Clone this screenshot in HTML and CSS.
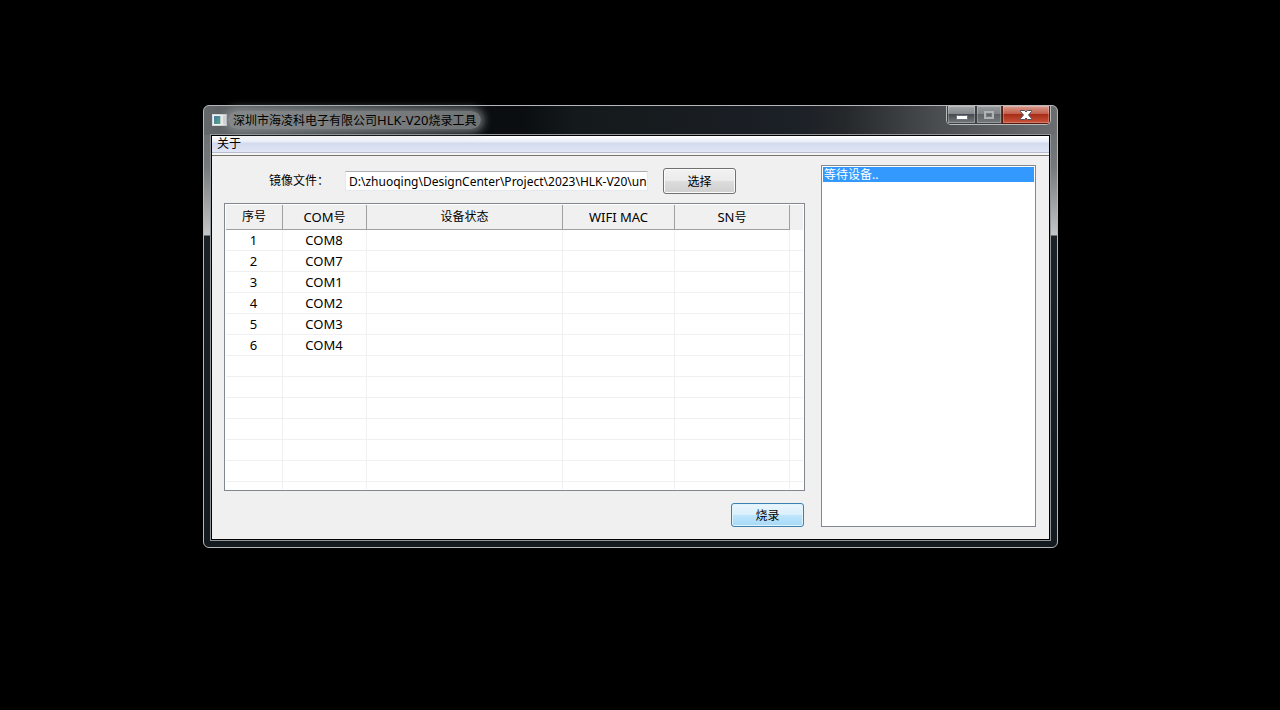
FILE: index.html
```html
<!DOCTYPE html>
<html lang="zh-CN">
<head>
<meta charset="utf-8">
<title>深圳市海凌科电子有限公司HLK-V20烧录工具</title>
<link rel="stylesheet" href="styles.css">
</head>
<body>
<main class="window">
  <header class="titlebar">
    <svg class="app-icon" width="16" height="14" viewBox="0 0 16 14" aria-hidden="true">
      <defs><linearGradient id="pane" x1="0" y1="0" x2="1" y2="1"><stop offset="0" stop-color="#4779b0"/><stop offset="1" stop-color="#55a878"/></linearGradient></defs>
      <rect x="0.5" y="1.5" width="14" height="11" fill="#f4f5f6" stroke="#d4d8da"/>
      <rect x="2" y="3" width="6" height="8" fill="url(#pane)"/>
      <rect x="8" y="3" width="1" height="8" fill="#b9d2cc"/>
      <rect x="11" y="3" width="2" height="8" fill="#e4e6e6"/>
    </svg>
    <h1 class="title">深圳市海凌科电子有限公司<span class="latin">HLK-V20</span>烧录工具</h1>
    <div class="caption">
      <button class="cap cap-min" type="button" aria-label="最小化"><svg width="12" height="6" viewBox="0 0 12 6"><rect x="0.5" y="1.5" width="11" height="4" rx="1" fill="#fff" stroke="#6a7080"/></svg></button>
      <button class="cap cap-max" type="button" aria-label="最大化" disabled><svg width="12" height="10" viewBox="0 0 12 10"><path d="M2 2h8v6H2z" fill="none" stroke="#b0b3b4" stroke-width="2"/><path d="M3.500 3.500h5v3h-5z" fill="none" stroke="#777b7d"/></svg></button>
      <button class="cap cap-close" type="button" aria-label="关闭"><svg width="12" height="10" viewBox="0 0 12 10"><path d="M.5 .5h4L6 2 7.500 .5h4v1L8.500 5l3 3.500v1h-4L6 8 4.500 9.500h-4v-1L3.500 5l-3-3.500z" fill="#fff" stroke="#50505c"/></svg></button>
    </div>
  </header>
  <div class="frame">
    <nav class="menubar"><button class="menu" type="button">关于</button></nav>
    <div class="client">
      <section class="left">
        <div class="file-row">
          <label class="label" for="image">镜像文件：</label>
          <input class="path" id="image" type="text" value="D:\zhuoqing\DesignCenter\Project\2023\HLK-V20\uni_app.img">
          <button class="btn" type="button">选择</button>
        </div>
        <div class="grid-box">
          <table class="grid">
            <colgroup><col class="c-no"><col class="c-com"><col class="c-state"><col class="c-mac"><col class="c-sn"><col class="c-end"></colgroup>
            <thead><tr><th>序号</th><th><span class="latin">COM</span>号</th><th>设备状态</th><th><span class="latin">WIFI MAC</span></th><th><span class="latin">SN</span>号</th><th class="end"></th></tr></thead>
            <tbody>
              <tr><td>1</td><td>COM8</td><td></td><td></td><td></td><td></td></tr>
              <tr><td>2</td><td>COM7</td><td></td><td></td><td></td><td></td></tr>
              <tr><td>3</td><td>COM1</td><td></td><td></td><td></td><td></td></tr>
              <tr><td>4</td><td>COM2</td><td></td><td></td><td></td><td></td></tr>
              <tr><td>5</td><td>COM3</td><td></td><td></td><td></td><td></td></tr>
              <tr><td>6</td><td>COM4</td><td></td><td></td><td></td><td></td></tr>
              <tr><td></td><td></td><td></td><td></td><td></td><td></td></tr>
              <tr><td></td><td></td><td></td><td></td><td></td><td></td></tr>
              <tr><td></td><td></td><td></td><td></td><td></td><td></td></tr>
              <tr><td></td><td></td><td></td><td></td><td></td><td></td></tr>
              <tr><td></td><td></td><td></td><td></td><td></td><td></td></tr>
              <tr><td></td><td></td><td></td><td></td><td></td><td></td></tr>
              <tr class="last"><td></td><td></td><td></td><td></td><td></td><td></td></tr>
            </tbody>
          </table>
        </div>
        <div class="actions"><button class="btn btn-primary" type="button">烧录</button></div>
      </section>
      <ul class="log"><li class="log-item">等待设备..</li></ul>
    </div>
  </div>
</main>
</body>
</html>
```

FILE: styles.css
```css
* { box-sizing: border-box; }
body {
  margin: 0;
  padding: 105px 222px 105px 203px;
  background: #000;
  color: #000;
  font: 12px/16px "Noto Sans", "Noto Sans CJK SC", sans-serif;
}
button, input { font: inherit; color: inherit; }
.latin { font-size: 13px; }
.window {
  border: 1px solid #b4b8ba;
  border-radius: 6px;
  padding: 0 6px 6px;
  background:
    linear-gradient(90deg, #64686b 0, #43484b 110px, #0a0e10 280px, #0a0e10 320px, #14191b 370px, #1c2027 590px, #24282b 640px, #4c5053 740px, #6a6e70 100%) 0 0 / 100% 29px no-repeat,
    linear-gradient(#676b6e 0, #75787a 60px, #c4c5c6 129px, #1a2127 130px, #141b20 100%);
}
.titlebar { display: flex; height: 28px; padding-left: 2px; }
.app-icon { margin-top: 7px; }
.title {
  margin: 5px 0 0;
  padding: 1px 5px;
  height: 18px;
  border-radius: 9px;
  background: rgba(145, 149, 151, .75);
  box-shadow: 0 0 8px 3px rgba(145, 149, 151, .75);
  font-size: 12px;
  line-height: 16px;
  font-weight: 400;
  white-space: nowrap;
}
.caption {
  display: flex;
  align-self: flex-start;
  margin-left: auto;
  height: 19px;
  border: 1px solid #b9bcbd;
  border-top: 0;
  border-radius: 0 0 5px 5px;
  overflow: hidden;
}
.cap {
  display: grid;
  place-items: center;
  width: 28px;
  padding: 0;
  border: 1px solid #3c4043;
  border-top: 0;
  background: linear-gradient(#a4a7a9, #83878a 48%, #474c50 50%, #74797c);
  box-shadow: inset 0 0 0 1px rgba(255, 255, 255, .25);
}
.cap-min { width: 29px; padding-top: 4px; }
.cap-max { width: 26px; background: linear-gradient(#95989a, #7f8284 48%, #606466 50%, #75797b); }
.cap-close { width: 48px; border-color: #571a11; background: linear-gradient(#d99a8c, #c25c49 48%, #a82d18 50%, #c9543b); }
.frame { border: 1px solid #929698; padding: 1px; background: #000; }
.menubar {
  display: flex;
  height: 20px;
  padding-left: 5px;
  border-bottom: 1px solid #77716c;
  background: linear-gradient(#fff 0, #e9edf8 6px, #d3daed 7px, #e2e7f6 16px, #b6bccc 16px, #b6bccc 17px, #f5f5f5 17px);
}
.menu { height: 16px; padding: 0; border: 0; background: none; }
.client {
  display: grid;
  grid-template-columns: 1fr 215px;
  gap: 16px;
  padding: 9px 13px 12px 12px;
  background: #f0f0f0;
}
.left { min-width: 0; padding-top: 3px; }
.file-row { display: flex; align-items: center; gap: 15px; height: 26px; padding-left: 45px; }
.label { width: 61px; white-space: nowrap; }
.path {
  width: 303px;
  height: 20px;
  padding: 0 0 0 3px;
  border: 1px solid #e3e9ef;
  border-top-color: #abadb3;
  border-radius: 1px;
  background: #fff;
}
.btn {
  width: 73px;
  height: 26px;
  padding: 2px 0 0;
  border: 1px solid #707070;
  border-radius: 3px;
  background: linear-gradient(#f2f2f2, #ebebeb 49%, #dddddd 50%, #cfcfcf);
  box-shadow: inset 0 0 0 1px #fbfbfb;
}
.btn-primary {
  height: 24px;
  border-color: #3c7fb1;
  background: linear-gradient(#eaf6fd, #d9f0fc 49%, #bee6fd 50%, #a7d9f5);
  box-shadow: inset 0 0 0 1px #dff4fd;
}
.grid-box {
  margin-top: 9px;
  padding: 1px;
  border: 1px solid #828790;
  background: #fff;
}
.grid { width: 100%; table-layout: fixed; border-collapse: separate; border-spacing: 0; }
.c-no { width: 57px; }
.c-com { width: 84px; }
.c-mac { width: 112px; }
.c-sn { width: 115px; }
.c-end { width: 13px; }
.grid th {
  height: 25px;
  padding: 0;
  border-right: 1px solid #a0a0a0;
  border-bottom: 1px solid #a0a0a0;
  background: #f0f0f0;
  font-weight: 400;
}
.grid .end { border-right: 0; border-bottom-color: #f0f0f0; }
.grid td {
  height: 21px;
  padding: 0 1px 0 0;
  border-right: 1px solid #f0f0f0;
  border-bottom: 1px solid #f0f0f0;
  font-size: 13px;
  text-align: center;
}
.grid td:last-child { border-right: 0; }
.grid .last td { height: 7px; border-bottom: 0; }
.actions { display: flex; justify-content: flex-end; margin-top: 12px; padding-right: 1px; }
.log {
  margin: 0;
  padding: 1px;
  border: 1px solid #828790;
  background: #fff;
  list-style: none;
}
.log-item { height: 15px; padding-left: 1px; background: #3399ff; color: #fff; }
```
